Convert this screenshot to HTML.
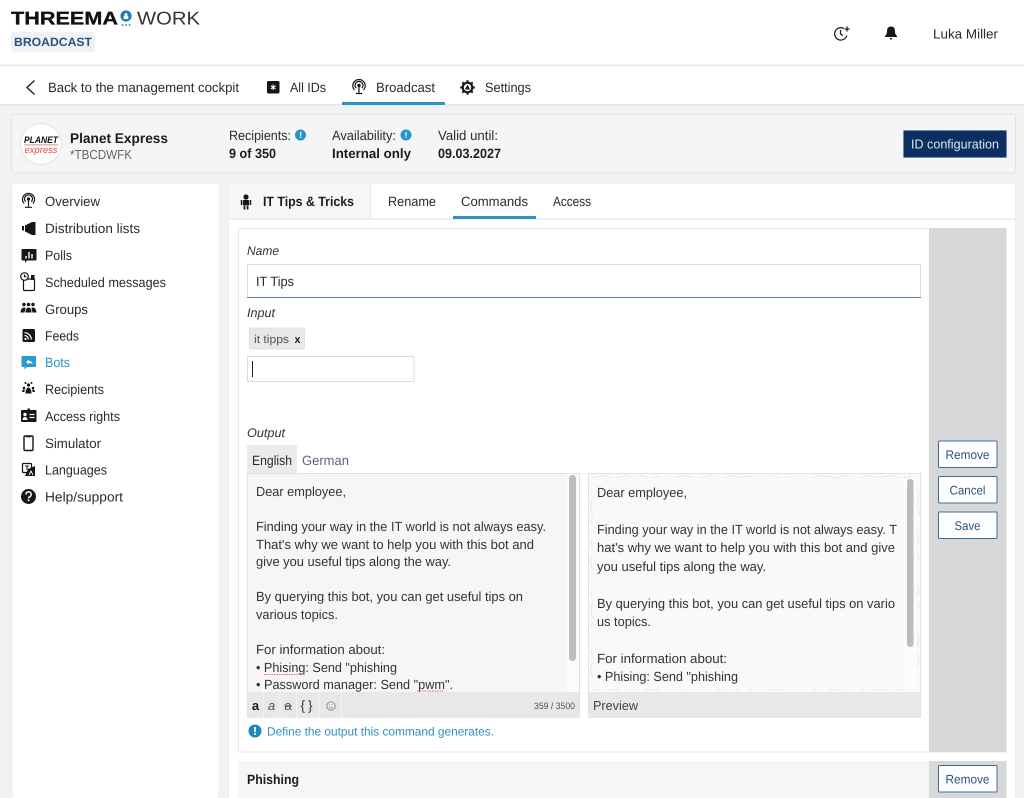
<!DOCTYPE html>
<html lang="en"><head><meta charset="utf-8"><title>Threema Work Broadcast</title>
<style>
html,body{margin:0;padding:0;width:1024px;height:798px;overflow:hidden;background:#f1f2f4}
svg{display:block}
text{font-family:"Liberation Sans",Arial,sans-serif;font-size:13.5px;fill:#2b2b2b;white-space:pre;text-rendering:geometricPrecision}
.b{font-weight:700;fill:#1c1c1c}
.i{font-style:italic;fill:#333}
.t{font-size:13.2px;fill:#333}
.btn{fill:#fff;stroke:#3f6a9c;stroke-width:1}
.bt{fill:#2a5183;font-size:12.5px;text-anchor:middle}
.ic{fill:#161616}
.ln{fill:none;stroke:#161616;stroke-width:1.2}
.d{fill:none;stroke:#e2e2e2;stroke-width:.8}
</style></head><body>
<svg width="1024" height="798" viewBox="0 0 1024 798" xmlns="http://www.w3.org/2000/svg">
<rect width="1024" height="798" fill="#f1f2f4"/>
<!-- header -->
<rect width="1024" height="65" fill="#fff"/>
<rect y="64.500" width="1024" height="1.500" fill="#e8e8e8"/>
<text x="11" y="24.500" class="b" style="font-size:18.500px;fill:#111;stroke:#111;stroke-width:.3" textLength="107" lengthAdjust="spacingAndGlyphs">THREEMA</text>
<circle cx="126" cy="16" r="5.600" fill="#1b7fb0"/><path d="M123.700 19v-3h4.600v3zM124.500 16v-1.400a1.500 1.500 0 0 1 3 0V16" fill="#fff"/>
<circle cx="122.500" cy="25" r=".9" fill="#1b7fb0"/><circle cx="126" cy="25" r=".9" fill="#1b7fb0"/><circle cx="129.500" cy="25" r=".9" fill="#1b7fb0"/>
<text x="137" y="24.500" style="font-size:18.500px;fill:#333" textLength="63" lengthAdjust="spacingAndGlyphs">WORK</text>
<rect x="11" y="32" width="84" height="20" rx="2.500" fill="#f0f2f5"/>
<text x="14" y="46" class="b" style="font-size:12px;fill:#2b4f7e" textLength="78" lengthAdjust="spacingAndGlyphs">BROADCAST</text>
<!-- moon/clock -->
<path d="M844 28.500a6.200 6.200 0 1 0 2.800 7" class="ln"/><path d="M840.500 30v4l2.500 1.500" class="ln" stroke-width="1.100"/><path d="M847 26.500v5M844.500 29h5" class="ln"/>
<!-- bell -->
<path d="M891 26.500c-3 0-4 2-4 5 0 2.500-1 3.500-2 4.500v1h12v-1c-1-1-2-2-2-4.500 0-3-1-5-4-5z" class="ic"/><path d="M889.500 38h3l-1.500 2z" class="ic"/>
<text x="933" y="38.500" textLength="65" lengthAdjust="spacingAndGlyphs">Luka Miller</text>
<!-- nav -->
<rect y="66" width="1024" height="38" fill="#fff"/>
<rect y="104" width="1024" height="1.500" fill="#e4e5e7"/>
<path d="M34.500 80.500L27 87.500l7.500 7" fill="none" stroke="#222" stroke-width="1.400"/>
<text x="48" y="92" textLength="191" lengthAdjust="spacingAndGlyphs">Back to the management cockpit</text>
<rect x="267" y="81" width="12.500" height="12.500" rx="1.500" class="ic"/><path d="M273.200 84.500v5.500M270.800 85.800l4.800 3M275.600 85.800l-4.800 3" stroke="#fff" stroke-width="1.100"/>
<text x="290" y="92" textLength="36" lengthAdjust="spacingAndGlyphs">All IDs</text>
<g transform="translate(359 87)"><circle r="1.700" cy="-1.500" class="ic"/><path d="M-2.800 1.200a4 4 0 1 1 5.600 0M-4.500 3a6.200 6.200 0 1 1 9 0" class="ln" stroke-width="1.100"/><path d="M0 0v6M-3.200 6.500h6.400" class="ln"/></g>
<text x="376" y="92" textLength="59" lengthAdjust="spacingAndGlyphs">Broadcast</text>
<rect x="342" y="102" width="103" height="3" fill="#2a93c7"/>
<g transform="translate(467.500 87.500)"><circle r="4.800" fill="none" stroke="#161616" stroke-width="2.200"/><path d="M0-7.300V7.300M-7.300 0H7.300M-5.200-5.200L5.200 5.200M-5.200 5.200L5.200-5.200" stroke="#161616" stroke-width="2"/><circle r="3.700" fill="#fff"/><path d="M0-3L2.600 2H-2.600z" class="ic"/></g>
<text x="485" y="92" textLength="46" lengthAdjust="spacingAndGlyphs">Settings</text>
<!-- ID card -->
<rect x="11.500" y="114.500" width="1004" height="58.500" rx="2" fill="#f5f5f6" stroke="#e3e4e6"/>
<circle cx="41" cy="144" r="20.500" fill="#fff" stroke="#e2e2e2"/>
<text x="41" y="143" text-anchor="middle" class="b" style="font-size:9.500px;font-style:italic;fill:#111" textLength="34" lengthAdjust="spacingAndGlyphs">PLANET</text>
<rect x="24" y="144.500" width="34" height=".8" fill="#e66"/>
<text x="41" y="153" text-anchor="middle" style="font-size:9.500px;font-style:italic;fill:#e8484a" textLength="33" lengthAdjust="spacingAndGlyphs">express</text>
<text x="70" y="143" class="b" style="font-size:14px" textLength="98" lengthAdjust="spacingAndGlyphs">Planet Express</text>
<text x="70" y="159" style="fill:#666;font-size:13px" textLength="62" lengthAdjust="spacingAndGlyphs">*TBCDWFK</text>
<text x="229" y="140" textLength="62" lengthAdjust="spacingAndGlyphs">Recipients:</text>
<circle cx="300.500" cy="135" r="5.500" fill="#2a93c7"/><rect x="300" y="132" width="1.200" height="3.800" fill="#fff"/><rect x="300" y="136.600" width="1.200" height="1.300" fill="#fff"/>
<text x="229" y="158" class="b" textLength="47" lengthAdjust="spacingAndGlyphs">9 of 350</text>
<text x="332" y="140" textLength="64" lengthAdjust="spacingAndGlyphs">Availability:</text>
<circle cx="406" cy="135" r="5.500" fill="#2a93c7"/><rect x="405.400" y="132" width="1.200" height="3.800" fill="#fff"/><rect x="405.400" y="136.600" width="1.200" height="1.300" fill="#fff"/>
<text x="332" y="158" class="b" textLength="79" lengthAdjust="spacingAndGlyphs">Internal only</text>
<text x="438" y="140" textLength="60" lengthAdjust="spacingAndGlyphs">Valid until:</text>
<text x="438" y="158" class="b" textLength="63" lengthAdjust="spacingAndGlyphs">09.03.2027</text>
<rect x="903.500" y="130.500" width="103" height="27" rx="1" fill="#0a2f60" stroke="#6d8bb0"/>
<text x="911" y="148.500" style="fill:#dfe6ef;font-size:13px" textLength="88" lengthAdjust="spacingAndGlyphs">ID configuration</text>
<!-- sidebar -->
<rect x="12" y="183.500" width="207" height="615" rx="2" fill="#fff" stroke="#ececee" stroke-width=".8"/>
<g transform="translate(28.500 200.500)"><circle r="1.600" cy="-1.500" class="ic"/><path d="M-2.800 1.200a4 4 0 1 1 5.600 0M-4.300 3a6 6 0 1 1 8.600 0" class="ln" stroke-width="1"/><path d="M0 0v6M-3.500 6.800h7" class="ln" stroke-width="1.100"/></g>
<text x="45" y="206" textLength="55" lengthAdjust="spacingAndGlyphs">Overview</text>
<path d="M22 226h2v4.500h-2zM25 225.500l7-3.500h3.500v13H32l-7-3.500z" class="ic"/>
<text x="45" y="233" textLength="95" lengthAdjust="spacingAndGlyphs">Distribution lists</text>
<path d="M22.500 249h13a1 1 0 0 1 1 1v9.500a1 1 0 0 1-1 1H27l-2 2.500v-2.500h-2.500a1 1 0 0 1-1-1V250a1 1 0 0 1 1-1z" class="ic"/><path d="M26 256v2.500M29 252v6.500M32 254v4.500" stroke="#fff" stroke-width="1.400"/>
<text x="45" y="260" textLength="27" lengthAdjust="spacingAndGlyphs">Polls</text>
<rect x="23.500" y="279" width="11" height="11.500" rx="1" class="ln"/><circle cx="24.500" cy="276.500" r="3.800" fill="#fff" stroke="#161616" stroke-width="1.200"/><path d="M24.500 274.500v2.200h2" class="ln" stroke-width=".9"/><rect x="31" y="275" width="3.500" height="5" class="ic"/>
<text x="45" y="287" textLength="121" lengthAdjust="spacingAndGlyphs">Scheduled messages</text>
<circle cx="24" cy="304.500" r="1.700" class="ic"/><circle cx="28.500" cy="304.500" r="1.800" class="ic"/><circle cx="33" cy="304.500" r="1.700" class="ic"/><path d="M20.500 312.500c.5-4 2-5 3.500-5s2 .5 1.500 1l-1 4zM25.500 312.500c0-3.500 1.500-5 3-5s3 1.500 3 5zM32.500 312.500l-1-4c-.5-.5 0-1 1.500-1s3 1 3.500 5z" class="ic"/>
<text x="45" y="314" textLength="43" lengthAdjust="spacingAndGlyphs">Groups</text>
<rect x="22.500" y="329" width="12.500" height="13" rx="1.500" class="ic"/><circle cx="25.500" cy="339" r="1.100" fill="#fff"/><path d="M24.500 335.500a4 4 0 0 1 4 4M24.500 332.700a6.800 6.800 0 0 1 6.800 6.800" fill="none" stroke="#fff" stroke-width="1.200"/>
<text x="45" y="340.500" textLength="34" lengthAdjust="spacingAndGlyphs">Feeds</text>
<path d="M22.500 356h12.500a1 1 0 0 1 1 1v9a1 1 0 0 1-1 1H27l-2.500 2.500V367h-2a1 1 0 0 1-1-1v-9a1 1 0 0 1 1-1z" fill="#2a9ad0"/><path d="M29 359.500l-3 2.500 3 2.500V363c2 0 3 .5 3.500 1.500 0-2-1-3.500-3.500-3.500z" fill="#fff"/>
<text x="45" y="367" style="fill:#2a93c7" textLength="25" lengthAdjust="spacingAndGlyphs">Bots</text>
<circle cx="28.500" cy="385" r="1.600" class="ic"/><circle cx="24" cy="388" r="1.300" class="ic"/><circle cx="33" cy="388" r="1.300" class="ic"/><circle cx="25.500" cy="383" r="1" class="ic"/><circle cx="31.500" cy="383" r="1" class="ic"/><path d="M25.500 393.500c0-3.500 1.300-6 3-6s3 2.500 3 6zM22 392c.2-2 1-2.500 2-2.500l1 .5-.8 2zM35 392c-.2-2-1-2.500-2-2.500l-1 .5.800 2z" class="ic"/>
<text x="45" y="394" textLength="59" lengthAdjust="spacingAndGlyphs">Recipients</text>
<rect x="21" y="410" width="15.500" height="12" rx="1" class="ic"/><rect x="27.500" y="408.500" width="2.500" height="2" class="ic"/><circle cx="25" cy="414.500" r="1.700" fill="#fff"/><path d="M22.500 420c0-2 1-3 2.500-3s2.500 1 2.500 3z" fill="#fff"/><path d="M29.500 414.500h5M29.500 417.500h5" stroke="#fff" stroke-width="1.200"/>
<text x="45" y="421" textLength="75" lengthAdjust="spacingAndGlyphs">Access rights</text>
<rect x="24" y="436" width="9" height="14.500" rx="1.300" fill="none" stroke="#161616" stroke-width="1.400"/><rect x="26" y="436" width="5" height="1.300" class="ic"/>
<text x="45" y="448" textLength="56" lengthAdjust="spacingAndGlyphs">Simulator</text>
<rect x="22.500" y="463.500" width="9" height="9" rx="1" fill="#fff" stroke="#161616" stroke-width="1.200"/><path d="M25 466h4M27 466v4" stroke="#161616" stroke-width="1"/><path d="M28 469l7-3v10H25z" class="ic"/><path d="M29 475l2-4 2 4" fill="none" stroke="#fff" stroke-width=".9"/>
<text x="45" y="474.500" textLength="62" lengthAdjust="spacingAndGlyphs">Languages</text>
<circle cx="28.500" cy="496.500" r="7.500" class="ic"/><path d="M26 494.500a2.600 2.600 0 1 1 3.800 2.200c-.9.500-1.300 1-1.300 1.800" fill="none" stroke="#fff" stroke-width="1.500"/><rect x="27.700" y="499.500" width="1.700" height="1.700" fill="#fff"/>
<text x="45" y="501.500" textLength="78" lengthAdjust="spacingAndGlyphs">Help/support</text>
<!-- main panel -->
<rect x="228.500" y="183.500" width="787" height="615" rx="2" fill="#fff" stroke="#ececee" stroke-width=".8"/>
<rect x="229" y="184" width="141" height="35" fill="#f6f6f6"/>
<rect x="370" y="184" width="1" height="35" fill="#e6e6e6"/>
<rect x="229" y="218.500" width="787" height="1.500" fill="#ebecee"/>
<g class="ic"><circle cx="246" cy="197" r="2.600"/><rect x="243" y="200" width="6" height="5.500" rx=".6"/><rect x="240.800" y="200" width="1.500" height="5"/><rect x="249.700" y="200" width="1.500" height="5"/><rect x="243.600" y="206" width="1.700" height="3.500"/><rect x="246.700" y="206" width="1.700" height="3.500"/></g>
<text x="263" y="206" class="b" textLength="91" lengthAdjust="spacingAndGlyphs">IT Tips &amp; Tricks</text>
<text x="388" y="206" textLength="48" lengthAdjust="spacingAndGlyphs">Rename</text>
<text x="461" y="206" textLength="67" lengthAdjust="spacingAndGlyphs">Commands</text>
<text x="553" y="206" textLength="38" lengthAdjust="spacingAndGlyphs">Access</text>
<rect x="453" y="216" width="83" height="3" fill="#2a93c7"/>
<!-- form card -->
<rect x="238.500" y="228.500" width="767.500" height="523.500" fill="#fff" stroke="#e9e9e9"/>
<rect x="929" y="228" width="77.500" height="524" fill="#d8d8d8"/>
<text x="247" y="255" class="i" style="font-size:12.500px" textLength="32" lengthAdjust="spacingAndGlyphs">Name</text>
<rect x="247.500" y="264.500" width="673" height="33" fill="#fff" stroke="#dcdcdc"/>
<rect x="247" y="297" width="674" height="1" fill="#5a7da8"/>
<text x="256" y="286" textLength="38" lengthAdjust="spacingAndGlyphs">IT Tips</text>
<text x="247" y="317" class="i" style="font-size:12.500px" textLength="28" lengthAdjust="spacingAndGlyphs">Input</text>
<rect x="249.500" y="328" width="55" height="21" rx="1" fill="#e8e8e8" stroke="#e0e0e0"/>
<text x="254" y="343" style="font-size:11.500px;fill:#555" textLength="35" lengthAdjust="spacingAndGlyphs">it tipps</text>
<text x="294.500" y="343" class="b" style="font-size:11px" textLength="6" lengthAdjust="spacingAndGlyphs">x</text>
<rect x="247.500" y="356.500" width="166.500" height="25" rx="1" fill="#fff" stroke="#dcdcdc"/>
<rect x="252" y="361" width="1" height="16" fill="#222"/>
<text x="247" y="437" class="i" style="font-size:12.500px" textLength="38" lengthAdjust="spacingAndGlyphs">Output</text>
<rect x="247" y="445" width="50" height="28" fill="#ebebeb"/>
<text x="252" y="465" textLength="40" lengthAdjust="spacingAndGlyphs">English</text>
<text x="302" y="465" style="fill:#5b6478" textLength="47" lengthAdjust="spacingAndGlyphs">German</text>
<!-- text area -->
<rect x="247.500" y="473.500" width="332" height="244" fill="#f6f6f6" stroke="#e2e2e2"/>
<rect x="566.500" y="474" width="12.500" height="218" fill="#fbfbfb"/>
<rect x="569" y="475" width="7" height="186" rx="3.500" fill="#bcbcbc"/>
<text x="256" y="496" class="t" textLength="90" lengthAdjust="spacingAndGlyphs">Dear employee,</text>
<text x="256" y="531" class="t" textLength="290" lengthAdjust="spacingAndGlyphs">Finding your way in the IT world is not always easy.</text>
<text x="256" y="549" class="t" textLength="278" lengthAdjust="spacingAndGlyphs">That's why we want to help you with this bot and</text>
<text x="256" y="566" class="t" textLength="195" lengthAdjust="spacingAndGlyphs">give you useful tips along the way.</text>
<text x="256" y="601" class="t" textLength="267" lengthAdjust="spacingAndGlyphs">By querying this bot, you can get useful tips on</text>
<text x="256" y="619" class="t" textLength="82" lengthAdjust="spacingAndGlyphs">various topics.</text>
<text x="256" y="654" class="t" textLength="129" lengthAdjust="spacingAndGlyphs">For information about:</text>
<text x="256" y="672" class="t" textLength="141" lengthAdjust="spacingAndGlyphs">• Phising: Send "phishing</text>
<text x="256" y="689" class="t" textLength="197" lengthAdjust="spacingAndGlyphs">• Password manager: Send "pwm".</text>
<path d="M264 674.500h41M417 691h27" fill="none" stroke="#e66" stroke-width="1" stroke-dasharray="1.500 1"/>
<rect x="248" y="692" width="331" height="26" fill="#e8e8e8"/>
<path d="M263.500 692v26M280 692v26M296.500 692v26M319 692v26M341.500 692v26" stroke="#f3f3f3" stroke-width="1"/>
<text x="255.500" y="710" text-anchor="middle" class="b" style="font-size:13px">a</text>
<text x="271.500" y="710" text-anchor="middle" style="font-size:13px;font-style:italic;fill:#555">a</text>
<text x="288" y="710" text-anchor="middle" style="font-size:13px;fill:#555;text-decoration:line-through">a</text>
<text x="308" y="710" text-anchor="middle" style="font-size:13.500px;fill:#333;letter-spacing:3px">{}</text>
<circle cx="331" cy="706" r="4.200" fill="none" stroke="#888" stroke-width=".9"/><path d="M329 707.200c.7 1.200 3.300 1.200 4 0" fill="none" stroke="#888" stroke-width=".7"/><circle cx="329.500" cy="704.700" r=".5" fill="#888"/><circle cx="332.500" cy="704.700" r=".5" fill="#888"/>
<text x="534" y="709" style="font-size:9.300px;fill:#555" textLength="41" lengthAdjust="spacingAndGlyphs">359 / 3500</text>
<circle cx="255" cy="731" r="6.500" fill="#1f87bb"/><rect x="254.100" y="727" width="1.800" height="5" fill="#fff"/><rect x="254.100" y="733" width="1.800" height="1.800" fill="#fff"/>
<text x="267" y="735.500" style="font-size:12px;fill:#2f8fbd" textLength="227" lengthAdjust="spacingAndGlyphs">Define the output this command generates.</text>
<!-- preview -->
<rect x="588.500" y="473.500" width="332" height="244" fill="#fafafa" stroke="#e2e2e2"/>
<path class="d" d="M592 478l12-3 9 4 14-4 6 3M640 475l9 4 11-3M675 478l9-3 12 4 15-4M722 479l10-4 9 3 13-2M770 475l11 4 13-3M812 478l9-3 14 3 12-3M860 479l8-4 11 3 13-3 9 4 10-3M590 490l3 8-3 9 3 8-3 9M591 540l2 12-3 9 3 10M590 590l3 11-2 8 2 12-3 9M591 650l2 10-3 10 3 9M916 485l3 10-2 9 3 11M917 530l2 10-3 8 3 12M916 580l3 10-3 9 3 10M917 630l2 10-3 10 3 9-2 8M592 690l12-2 9 2 14-2 6 2M640 688l9 2 11-1M680 689l30-1 12 2M735 690l9-2 8 2M765 688l11 2 13-2M812 690l9-2 14 2 12-2M860 690l8-2 11 2 13-2 9 2 10-2"/>
<rect x="592.500" y="478" width="311" height="211" fill="#f8f9fb"/>
<rect x="903.500" y="478" width="13.500" height="211" fill="#fcfcfd"/>
<rect x="907" y="479" width="6.500" height="168" rx="3" fill="#bcbcbc"/>
<text x="597" y="497" class="t" textLength="90" lengthAdjust="spacingAndGlyphs">Dear employee,</text>
<text x="597" y="534" class="t" textLength="300" lengthAdjust="spacingAndGlyphs">Finding your way in the IT world is not always easy. T</text>
<text x="597" y="552" class="t" textLength="298" lengthAdjust="spacingAndGlyphs">hat's why we want to help you with this bot and give</text>
<text x="597" y="571" class="t" textLength="169" lengthAdjust="spacingAndGlyphs">you useful tips along the way.</text>
<text x="597" y="608" class="t" textLength="298" lengthAdjust="spacingAndGlyphs">By querying this bot, you can get useful tips on vario</text>
<text x="597" y="626" class="t" textLength="54" lengthAdjust="spacingAndGlyphs">us topics.</text>
<text x="597" y="663" class="t" textLength="130" lengthAdjust="spacingAndGlyphs">For information about:</text>
<text x="597" y="681" class="t" textLength="141" lengthAdjust="spacingAndGlyphs">• Phising: Send "phishing</text>
<rect x="589" y="692" width="331" height="25.500" fill="#e8e8e8"/>
<text x="593" y="710" style="fill:#444;font-size:13px" textLength="45" lengthAdjust="spacingAndGlyphs">Preview</text>
<!-- buttons -->
<rect x="938.500" y="441" width="58.500" height="26.500" rx="1" class="btn"/><text x="967.500" y="459" class="bt" textLength="44" lengthAdjust="spacingAndGlyphs">Remove</text>
<rect x="938.500" y="476.500" width="58.500" height="26.500" rx="1" class="btn"/><text x="967.500" y="494.500" class="bt" textLength="36" lengthAdjust="spacingAndGlyphs">Cancel</text>
<rect x="938.500" y="512" width="58.500" height="26.500" rx="1" class="btn"/><text x="967.500" y="530" class="bt" textLength="26" lengthAdjust="spacingAndGlyphs">Save</text>
<!-- phishing row -->
<rect x="238" y="761" width="691" height="37" fill="#f6f6f6"/>
<rect x="929" y="761" width="77.500" height="37" fill="#d8d8d8"/>
<text x="247" y="784" class="b" textLength="52" lengthAdjust="spacingAndGlyphs">Phishing</text>
<rect x="938.500" y="765.500" width="58.500" height="26.500" rx="1" class="btn"/><text x="967.500" y="783.500" class="bt" textLength="44" lengthAdjust="spacingAndGlyphs">Remove</text>
</svg>
</body></html>
